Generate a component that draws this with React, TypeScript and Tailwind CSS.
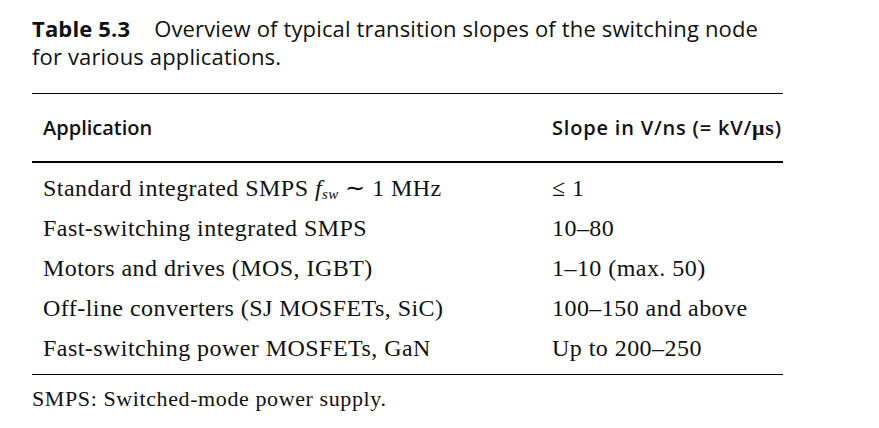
import React from "react";

const serif = { fontFamily: '"Liberation Serif", "Times New Roman", serif' };
const sans = { fontFamily: '"Open Sans", "Noto Sans", sans-serif' };

const rows: [React.ReactNode, React.ReactNode][] = [
  [
    <>
      Standard integrated SMPS <i>f</i>
      <sub className="italic text-[15px] relative top-[3px]">sw</sub> ∼ 1 MHz
    </>,
    <>≤ 1</>,
  ],
  ["Fast-switching integrated SMPS", "10–80"],
  ["Motors and drives (MOS, IGBT)", "1–10 (max. 50)"],
  ["Off-line converters (SJ MOSFETs, SiC)", "100–150 and above"],
  ["Fast-switching power MOSFETs, GaN", "Up to 200–250"],
];

export default function App() {
  return (
    <div className="w-[879px] h-[428px] bg-white text-[#111] overflow-hidden">
      <div className="pl-[32px] pt-[14px] w-[783px]">
        <div className="text-[22px] leading-[28px] tracking-[0.15px]" style={sans}>
          <span className="font-bold">Table 5.3</span>
          <span className="ml-[24px]">Overview of typical transition slopes of the switching node</span>
          <br />
          for various applications.
        </div>
        <div className="mt-[23px] border-t border-black" />
        <div className="flex items-center h-[67px] font-semibold text-[20px]" style={sans}>
          <div className="pl-[11px] w-[520px]">Application</div>
          <div className="tracking-[0.8px]">
            Slope in V/ns (= kV/<span className="font-bold text-[22px]" style={serif}>μs</span>)
          </div>
        </div>
        <div className="border-t-2 border-black" />
        <div className="pt-[5px] pb-[6px] tracking-[0.45px]" style={serif}>
          {rows.map((r, i) => (
            <div key={i} className="flex items-center h-[40px] text-[24px]">
              <div className="pl-[11px] w-[520px]">{r[0]}</div>
              <div>{r[1]}</div>
            </div>
          ))}
        </div>
        <div className="border-t border-black" />
        <div className="pt-[7px] text-[22px] tracking-[0.6px]" style={serif}>
          SMPS: Switched-mode power supply.
        </div>
      </div>
    </div>
  );
}
